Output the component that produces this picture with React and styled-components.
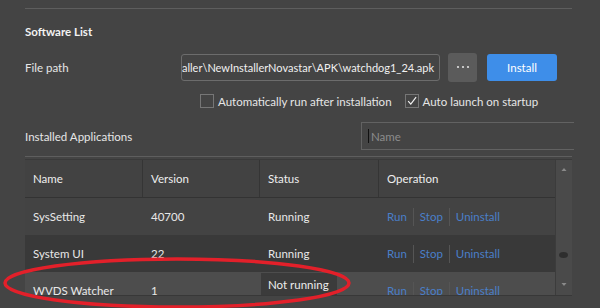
import React from 'react';
import styled, { createGlobalStyle } from 'styled-components';

const GlobalStyle = createGlobalStyle`
  html, body {
    margin: 0;
    padding: 0;
    background: #444444;
  }
  body {
    font-family: Lato, 'Noto Sans', sans-serif;
    font-size: 11.5px;
    color: #e6e6e6;
  }
`;

const apps = [
  { name: 'SysSetting', version: '40700', status: 'Running' },
  { name: 'System UI', version: '22', status: 'Running', tone: 'dark' },
  { name: 'WVDS Watcher', version: '1', status: 'Not running', tone: 'light', editing: true },
];

const App = () => (
  <>
    <GlobalStyle />
    <Page>
      <Divider />
      <Title>Software List</Title>

      <FieldRow $top={13}>
        <Label>File path</Label>
        <PathInput>
          <span>aller\NewInstallerNovastar\APK\watchdog1_24.apk</span>
        </PathInput>
        <DotsButton>
          <svg width="14" height="4" viewBox="0 0 14 4">
            <circle cx="2" cy="2" r="1.1" fill="#e0e0e0" />
            <circle cx="7" cy="2" r="1.1" fill="#e0e0e0" />
            <circle cx="12" cy="2" r="1.1" fill="#e0e0e0" />
          </svg>
        </DotsButton>
        <PrimaryButton>Install</PrimaryButton>
      </FieldRow>

      <OptionsRow>
        <Check>
          <Box />
          Automatically run after installation
        </Check>
        <Check>
          <Box>
            <svg width="14" height="14" viewBox="0 0 14 14">
              <path d="M2.5 7.2 L5.6 10.6 L11.8 2.6" fill="none" stroke="#f2f2f2" strokeWidth="1.4" />
            </svg>
          </Box>
          Auto launch on startup
        </Check>
      </OptionsRow>

      <FieldRow $top={13}>
        <Label>Installed Applications</Label>
        <SearchInput>
          <Caret />
          <Placeholder>Name</Placeholder>
        </SearchInput>
      </FieldRow>

      <Divider $top={6} />

      <Table>
        <TableMain>
          <HeaderRow>
            <HeadCell>Name</HeadCell>
            <HeadCell>Version</HeadCell>
            <HeadCell>Status</HeadCell>
            <HeadCell $last>Operation</HeadCell>
          </HeaderRow>
          <Body>
            {apps.map((a) => (
              <Row key={a.name} $tone={a.tone}>
                <Cell>{a.name}</Cell>
                <Cell>{a.version}</Cell>
                {a.editing ? (
                  <StatusCell>
                    <StatusEdit>{a.status}</StatusEdit>
                  </StatusCell>
                ) : (
                  <Cell>{a.status}</Cell>
                )}
                <OpCell>
                  <Link>Run</Link>
                  <Sep />
                  <Link>Stop</Link>
                  <Sep />
                  <Link>Uninstall</Link>
                </OpCell>
              </Row>
            ))}
          </Body>
        </TableMain>
        <Scrollbar>
          <svg width="16" height="134" viewBox="0 0 16 134">
            <path d="M5.5 11 L8 8 L10.5 11 Z" fill="#8a8a8a" />
            <ellipse cx="7.5" cy="95" rx="4.5" ry="3" fill="#2e2e2e" />
            <path d="M5.5 123 L8 126 L10.5 123 Z" fill="#8a8a8a" />
          </svg>
        </Scrollbar>
      </Table>

      <Annotation width="600" height="308" viewBox="0 0 600 308">
        <ellipse cx="177" cy="283" rx="172" ry="24" fill="none" stroke="#e3202a" strokeWidth="3.5" />
      </Annotation>
    </Page>
  </>
);

export default App;

const Page = styled.div`
  position: relative;
  width: 600px;
  height: 308px;
  overflow: hidden;
  padding: 0 28px 0 25px;
  box-sizing: border-box;
  display: flex;
  flex-direction: column;
`;

const Divider = styled.div`
  height: 1px;
  background: #5e5e5e;
  margin-top: ${({ $top }) => $top ?? 8}px;
  flex-shrink: 0;
`;

const Title = styled.div`
  font-weight: 700;
  font-size: 11.5px;
  color: #f2f2f2;
  margin-top: 14px;
  line-height: 17px;
`;

const FieldRow = styled.div`
  display: flex;
  align-items: center;
  height: 28px;
  flex-shrink: 0;
  margin-top: ${({ $top }) => $top ?? 14}px;
`;

const Label = styled.div`
  width: 156px;
  flex-shrink: 0;
  color: #e6e6e6;
`;

const PathInput = styled.div`
  width: 259px;
  height: 27px;
  box-sizing: border-box;
  border: 1px solid #6c6c6c;
  border-radius: 3px;
  display: flex;
  align-items: center;
  justify-content: flex-end;
  padding: 0 5px 0 2px;
  overflow: hidden;
  white-space: nowrap;
  font-size: 11px;
  color: #f0f0f0;
`;

const DotsButton = styled.div`
  width: 29px;
  height: 29px;
  margin-left: 8px;
  border-radius: 3px;
  background: #5b5b5b;
  display: flex;
  align-items: center;
  justify-content: center;
  svg {
    display: block;
  }
`;

const PrimaryButton = styled.div`
  width: 70px;
  height: 27px;
  margin-left: 10px;
  border-radius: 3px;
  background: #3e8ee9;
  color: #ffffff;
  display: flex;
  align-items: center;
  justify-content: center;
`;

const OptionsRow = styled.div`
  display: flex;
  align-items: center;
  gap: 13px;
  margin-top: 12px;
  padding-left: 175px;
  height: 16px;
  flex-shrink: 0;
`;

const Check = styled.div`
  display: flex;
  align-items: center;
  gap: 4px;
  color: #e6e6e6;
  white-space: nowrap;
`;

const Box = styled.div`
  width: 14px;
  height: 14px;
  box-sizing: border-box;
  border: 1px solid #767676;
  display: flex;
  align-items: center;
  justify-content: center;
  svg {
    display: block;
  }
`;

const SearchInput = styled.div`
  margin-left: 180px;
  flex: 1;
  height: 28px;
  box-sizing: border-box;
  border: 1px solid #626262;
  border-right: none;
  display: flex;
  align-items: center;
  padding-left: 6px;
  margin-right: -2px;
`;

const Caret = styled.div`
  width: 1px;
  height: 14px;
  background: #111;
  margin-right: 2px;
`;

const Placeholder = styled.span`
  color: #8c8c8c;
`;

const Table = styled.div`
  margin-top: 2px;
  display: flex;
  height: 135px;
  border-bottom: 1px solid #383838;
  border-top: 1px solid #3a3a3a;
  flex-shrink: 0;
`;

const TableMain = styled.div`
  width: 531px;
  display: flex;
  flex-direction: column;
`;

const cols = '118px 117px 119px 1fr';

const HeaderRow = styled.div`
  display: grid;
  grid-template-columns: ${cols};
  height: 37px;
  border-bottom: 1px solid #333;
  background: #424242;
  flex-shrink: 0;
`;

const HeadCell = styled.div`
  display: flex;
  align-items: center;
  padding-left: 8px;
  border-right: ${({ $last }) => ($last ? 'none' : '1px solid #353535')};
  color: #eeeeee;
`;

const Body = styled.div`
  flex: 1;
  overflow: hidden;
`;

const rowBg = { dark: '#393939', light: '#4d4d4d' };

const Row = styled.div`
  display: grid;
  grid-template-columns: ${cols};
  height: 37px;
  background: ${({ $tone }) => rowBg[$tone] || '#434343'};
`;

const Cell = styled.div`
  display: flex;
  align-items: center;
  padding-left: 8px;
  color: #e8e8e8;
`;

const StatusCell = styled.div`
  display: flex;
  align-items: flex-start;
  padding-left: 1px;
`;

const StatusEdit = styled.div`
  background: #3b3b3b;
  color: #ececec;
  height: 22px;
  padding: 0 8px 0 7px;
  display: flex;
  align-items: center;
  margin-top: 1px;
`;

const OpCell = styled.div`
  display: flex;
  align-items: center;
  padding-left: 8px;
  gap: 6px;
`;

const Link = styled.span`
  color: #4a7fc9;
`;

const Sep = styled.span`
  width: 1px;
  height: 18px;
  background: #555;
`;

const Scrollbar = styled.div`
  width: 16px;
  background: #4a4a4a;
  border-left: 1px solid #3c3c3c;
  svg {
    display: block;
  }
`;

const Annotation = styled.svg`
  position: absolute;
  left: 0;
  top: 0;
  pointer-events: none;
`;
